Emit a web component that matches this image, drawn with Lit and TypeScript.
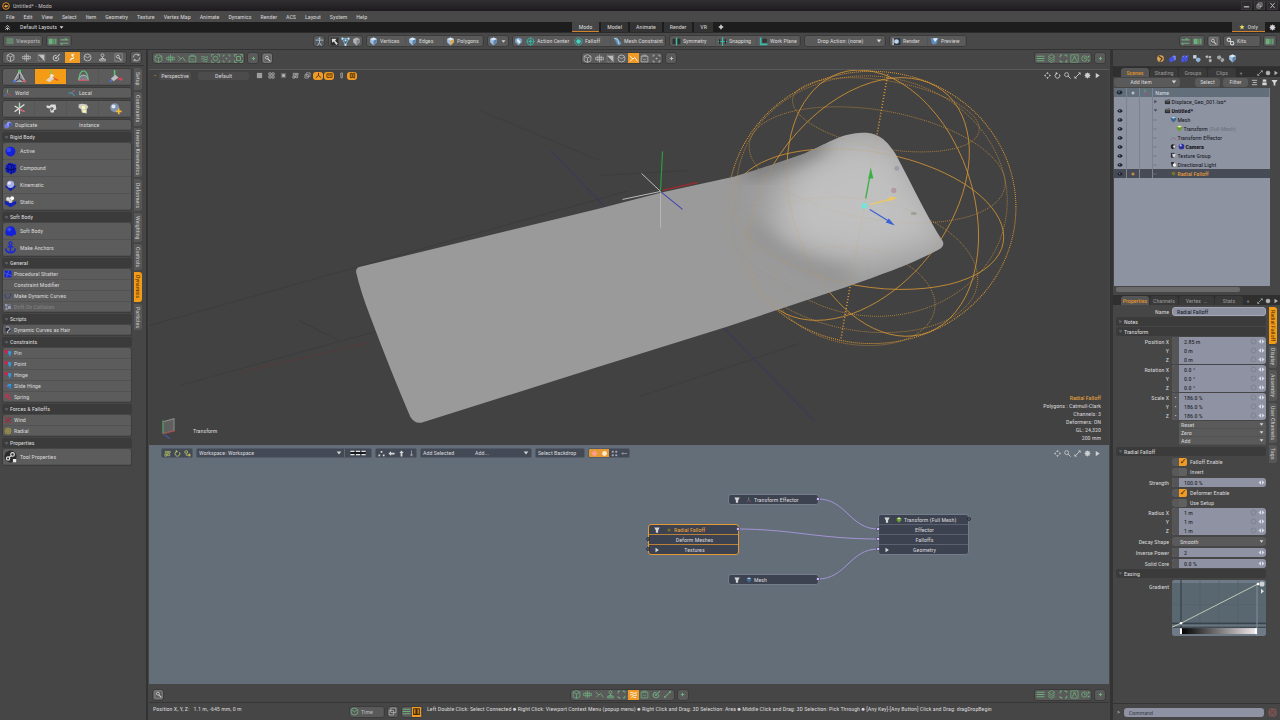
import { LitElement, html, svg, css, nothing } from "lit";
import { customElement } from "lit/decorators.js";
import { classMap } from "lit/directives/class-map.js";
import { styleMap } from "lit/directives/style-map.js";

const icons: Record<string, unknown> = {
  logo: svg`<circle cx="8" cy="8" r="6.6" fill="#1c1a18" stroke="#e0912f" stroke-width="2"/><path d="M4 9l3-4 2 2 3-1-1 4-4 1z" fill="#e8a24a"/>`,
  home: svg`<path d="M3 8l5-5 5 5M3 13l5-5 5 5M8 9v5" fill="none" stroke="currentColor" stroke-width="2"/>`,
  lines: svg`<path d="M1 4h14M1 8h14M1 12h14" stroke="currentColor" stroke-width="2.2"/>`,
  panel: svg`<path d="M1 3h14v10H1z" fill="currentColor"/><path d="M9 3v10M12 3v10" stroke="#3d4a42" stroke-width="1"/>`,
  swap: svg`<path d="M1 5h14M1 11h14" stroke="currentColor" stroke-width="2"/><path d="M9 2l3 3M4 14l-3-3" stroke="currentColor" stroke-width="2"/>`,
  cube: svg`<path d="M8 1l6 3v8l-6 3-6-3V4zM2 4l6 3 6-3M8 7v8" fill="none" stroke="currentColor" stroke-width="1.4"/>`,
  cross: svg`<path d="M8 1v14M1 6h14v4H1zM5 3v10M11 3v10" fill="none" stroke="currentColor" stroke-width="1.3"/>`,
  tri: svg`<path d="M3 2l11 11H3z" fill="currentColor" transform="rotate(180 8 8)"/><path d="M2 2h12v12H2z" fill="none" stroke="currentColor" stroke-dasharray="2 2"/>`,
  pen: svg`<path d="M14 2L7 9M12 8a5 5 0 1 1-4-4" fill="none" stroke="currentColor" stroke-width="1.8"/><circle cx="7" cy="9" r="1.8" fill="currentColor"/>`,
  spring: svg`<path d="M11 2c-3 0-5 2-3 4s3 3 0 4-5 1-4 4M6 3l4 2M5 11l5-2" fill="none" stroke="currentColor" stroke-width="1.7"/>`,
  clock: svg`<circle cx="8" cy="8" r="6.2" fill="none" stroke="currentColor" stroke-width="1.6"/><path d="M4 6l4 2.5L12 6" fill="none" stroke="currentColor" stroke-width="1.5"/>`,
  stamp: svg`<circle cx="8" cy="4" r="2.6" fill="none" stroke="currentColor" stroke-width="1.5"/><path d="M8 7v3M3 14h10v-3H3zM5 10h6" fill="none" stroke="currentColor" stroke-width="1.6"/>`,
  search: svg`<path d="M1.5 1.5h13v13h-13z" fill="none" stroke="#a8a8a8" stroke-width="1"/><circle cx="7" cy="6.5" r="2.6" fill="none" stroke="#cfcfcf" stroke-width="1.6"/><path d="M9 9l4 4" stroke="#cfcfcf" stroke-width="2"/>`,
  refresh: svg`<path d="M2 8a6 6 0 0 1 10-4.5M14 8a6 6 0 0 1-10 4.5" fill="none" stroke="currentColor" stroke-width="1.5"/><path d="M13 1v4H9zM3 15v-4h4z" fill="currentColor"/>`,
  bone: svg`<path d="M1 3l6 6 3-3 5 7M2 13l5-5" fill="none" stroke="currentColor" stroke-width="1.5"/>`,
  link: svg`<circle cx="12.500" cy="3.500" r="1.800" fill="currentColor"/><circle cx="3.500" cy="12.500" r="1.800" fill="currentColor"/><path d="M4 12l8-8" stroke="currentColor" stroke-width="1.800"/>`,
  box: svg`<path d="M2 4h12v10H2zM5 4V2h6v2M5 8l3 3 3-3" fill="none" stroke="currentColor" stroke-width="1.4"/>`,
  frame: svg`<path d="M1.500 1.500h13v13h-13z" fill="none" stroke="currentColor" stroke-width="1.400"/><path d="M4 12l4-7 4 7M6 5h4" fill="none" stroke="currentColor" stroke-width="1.500"/>`,
  timer: svg`<circle cx="6" cy="8" r="4.800" fill="none" stroke="currentColor" stroke-width="1.500"/><path d="M6 5v3h3" fill="none" stroke="currentColor" stroke-width="1.300"/><path d="M12 3h3v3h-3zM12 10h3v3h-3z" fill="currentColor"/>`,
  wave: svg`<path d="M2 5c3-3 5 3 12 0M2 9c4-3 6 3 12 0M4 13c3-3 5 2 9 0" fill="none" stroke="currentColor" stroke-width="1.6"/>`,
  target: svg`<path d="M1 5V1h4M11 1h4v4M15 11v4h-4M5 15H1v-4" fill="none" stroke="currentColor" stroke-width="1.4"/><circle cx="8" cy="8" r="4" fill="none" stroke="currentColor" stroke-width="1.5"/>`,
  dots: svg`<path d="M2 5V2h3M11 2h3v3M14 11v3h-3M5 14H2v-3" fill="none" stroke="currentColor" stroke-width="1.4"/><circle cx="8" cy="8" r="1.5" fill="currentColor"/>`,
  square: svg`<path d="M1 5V1h4M11 1h4v4M15 11v4h-4M5 15H1v-4M4.500 4.500h7v7h-7z" fill="none" stroke="currentColor" stroke-width="1.6"/>`,
  corners: svg`<path d="M2 6V2h4M10 2h4v4M14 10v4h-4M6 14H2v-4" fill="none" stroke="currentColor" stroke-width="1.800" stroke-dasharray="3 1"/>`,
  plus: svg`<path d="M8 5v6M5 8h6" stroke="currentColor" stroke-width="2"/>`,
  bigplus: svg`<path d="M8 2v12M2 8h12" stroke="currentColor" stroke-width="4"/>`,
  layers: svg`<path d="M8 1l6 3.500-6 3.500-6-3.500zM2 8l6 3.500L14 8M2 11.500L8 15l6-3.500" fill="none" stroke="currentColor" stroke-width="1.4"/>`,
  person: svg`<circle cx="8" cy="2.500" r="1.700" fill="#a9cbe8"/><path d="M1 5.500h14M8 5v5l-3.500 5.500M8 10l3.500 5.500" fill="none" stroke="#a9cbe8" stroke-width="1.500"/>`,
  pic: svg`<path d="M1 1h14v14H1z" fill="#2c2c2c"/><path d="M3 3h9l-3 3 5 6-3 2-4-6-3 2z" fill="#d8d8d8"/>`,
  net: svg`<path d="M2 3h12L8 14z" fill="#3e596b" stroke="#8fc7e6" stroke-width="1.500"/><circle cx="2.500" cy="3" r="2" fill="#bfe4f6"/><circle cx="13.500" cy="3" r="2" fill="#bfe4f6"/><circle cx="8" cy="14" r="2" fill="#bfe4f6"/><circle cx="8" cy="6" r="2" fill="#bfe4f6"/>`,
  shade: svg`<path d="M8 1l6 2.500v6L8 15 2 9.500v-6z" fill="#aeb2b5"/><path d="M8 6l6-2.500v6L8 15z" fill="#85888b"/>`,
  blue: svg`<path d="M8 1l6 2.500v6L8 15 2 9.500v-6z" fill="#9dbfe0"/><path d="M8 6l6-2.500v6L8 15z" fill="#5f83ab"/><path d="M2 3.500L8 1l6 2.500L8 6z" fill="#d6e6f4"/>`,
  poly: svg`<path d="M8 1l6 2.500v6L8 15 2 9.500v-6z" fill="#9dbfe0"/><path d="M8 6l6-2.500v6L8 15z" fill="#e8a548"/><path d="M2 3.500L8 1l6 2.500L8 6z" fill="#d6e6f4"/>`,
  shield: svg`<path d="M8 1l6 2.500v6L8 15 2 9.500v-6z" fill="#7ea5c8"/><path d="M5 4h3l4 5-3 3-4-5z" fill="#e2eef6"/>`,
  action: svg`<circle cx="8" cy="8" r="6" fill="none" stroke="#35b3a5" stroke-width="1.600"/><circle cx="8" cy="8" r="2.500" fill="#35b3a5"/><path d="M8 0v16M0 8h16" stroke="#35b3a5"/>`,
  falloff: svg`<circle cx="8" cy="8" r="6.500" fill="none" stroke="#35c9ba" stroke-width="1.600" stroke-dasharray="2 1"/><circle cx="8" cy="8" r="4" fill="#43d1c1"/>`,
  constraint: svg`<path d="M2 2l5-1 8 10-4 4-4-2z" fill="#5f94b8"/><path d="M2 2l6 2 3 9" fill="none" stroke="#c5e3f3" stroke-width="1.500"/>`,
  sym: svg`<path d="M1 3h5v10H1zM10 3h5v10h-5z" fill="#2b3331"/><path d="M8 1v14" stroke="#3bbfae" stroke-width="2"/>`,
  snap: svg`<path d="M8 0v16M0 8h16" stroke="#39b9a8" stroke-width="2"/><path d="M3 4v8M13 4v8" stroke="#222" stroke-width="2"/>`,
  plane: svg`<path d="M3 1v12h12" fill="none" stroke="#39b9a8" stroke-width="3"/><path d="M6 3h8v7H6z" fill="#333"/>`,
  render: svg`<path d="M1 2h14v12H1z" fill="#2b3442"/><circle cx="8" cy="8" r="4.200" fill="#bcd5ee"/><path d="M1 2h2v12H1z" fill="#eee"/>`,
  preview: svg`<path d="M1 2h14l-4 11H4z" fill="#5e8ec5"/><path d="M5 2h9L9 9z" fill="#e4f0fb"/>`,
  kits: svg`<circle cx="5" cy="5" r="3" fill="none" stroke="#ddd" stroke-width="1.800"/><circle cx="11" cy="11" r="3" fill="none" stroke="#ddd" stroke-width="1.800"/><path d="M7 7l2 2" stroke="#ddd" stroke-width="2"/>`,
  star: svg`<path d="M8 1l2 5h5l-4 3.500 1.500 5L8 11.500 3.500 14.500 5 9.500 1 6h5z" fill="#f0e06a"/>`,
  gear: svg`<circle cx="8" cy="8" r="5.500" fill="currentColor"/><path d="M8 1v14M1 8h14M3 3l10 10M13 3L3 13" stroke="currentColor" stroke-width="1.500"/>`,
  move: svg`<path d="M8 0l3 4H5zM8 16l3-4H5zM0 8l4-3v6zM16 8l-4-3v6z" fill="currentColor"/>`,
  orbit: svg`<path d="M12 5a5.500 5.500 0 1 1-7-1" fill="none" stroke="currentColor" stroke-width="2"/><path d="M4 0l5 3-5 4z" fill="currentColor"/>`,
  lens: svg`<circle cx="6" cy="6" r="4.500" fill="none" stroke="currentColor" stroke-width="1.800"/><path d="M9.500 9.500L15 15" stroke="currentColor" stroke-width="2.200"/>`,
  expand: svg`<path d="M9 1h6v6zM7 15H1V9z" fill="currentColor"/><path d="M12 4l-8 8" stroke="currentColor" stroke-width="2"/>`,
  right: svg`<path d="M4 2l9 6-9 6z" fill="currentColor"/>`,
  down: svg`<path d="M2 4h12l-6 8z" fill="currentColor"/>`,
  vee: svg`<path d="M1 1h14l-4 8v6H5V9z" fill="currentColor"/>`,
  funnel: svg`<path d="M1 2h14L10 9v6H6V9z" fill="currentColor"/>`,
  pan: svg`<path d="M2 2h12v12H2z" fill="currentColor" opacity=".75"/>`,
  grid4: svg`<path d="M2 2h5v5H2zM9 2h5v5H9zM2 9h5v5H2zM9 9h5v5H9z" fill="none" stroke="currentColor" stroke-width="1.600"/>`,
  mini: svg`<path d="M2 2h12v12H2z" fill="#666"/><path d="M5 5h6v6H5z" fill="currentColor"/>`,
  nodes: svg`<path d="M3 3h5v4H3zM8 9h5v4H8zM10 3h4v4h-4zM2 9h4v5H2z" fill="none" stroke="currentColor" stroke-width="1.600"/>`,
  addnode: svg`<path d="M2 2h6v5H2zM5 7v5h4" fill="none" stroke="currentColor" stroke-width="1.600"/><path d="M12 8v7M8.500 11.500h7" stroke="#e3d35a" stroke-width="2"/>`,
  windows: svg`<path d="M5 2h9v8H5zM2 6h8v8H2z" fill="#464646" stroke="currentColor" stroke-width="1.400"/>`,
  axisdk: svg`<path d="M8 2v6l-6 5M8 8l6 5" fill="none" stroke="#4a2c05" stroke-width="2"/>`,
  cam: svg`<path d="M2 4h12v8H2zM5 12v2M11 12v2M4 7h8" fill="none" stroke="#4a2c05" stroke-width="1.800"/>`,
  pause: svg`<path d="M3 3h4v10H3zM9 3h4v10H9z" fill="none" stroke="#4a2c05" stroke-width="2"/>`,
  pill: svg`<path d="M6 3l4-1v11l-3 1z" fill="none" stroke="currentColor" stroke-width="1.600"/>`,
  giz1: svg`<path d="M8 2l6 11H2z" fill="#8a8d94" stroke="#c9ccd2"/><path d="M8 6v4l-4 3M8 10l4 3" stroke="#333" fill="none"/><circle cx="8" cy="2" r="1.600" fill="#5fc46f"/><circle cx="2.500" cy="13" r="1.500" fill="#4b78d8"/><circle cx="13.500" cy="13" r="1.500" fill="#d25b6a"/>`,
  giz2: svg`<path d="M8 9V1" stroke="#77c95e" stroke-width="1.500"/><path d="M8 9l7 3" stroke="#e2563a" stroke-width="1.500"/><path d="M2 12l5-4 4 2-5 4z" fill="#ddd6c8"/><path d="M8 5l3 2-3 3-2-3z" fill="#f3e6c8"/>`,
  giz3: svg`<path d="M3 12a5 5.500 0 0 1 10 0z" fill="#777c86" stroke="#bfc4cc"/><path d="M3 12a5 10 0 0 1 10 0" fill="none" stroke="#62bd78" stroke-width="1.300"/><path d="M3 12h10" stroke="#c65a6a" stroke-width="1.500"/>`,
  giz4: svg`<path d="M7 8V1" stroke="#5fc46f" stroke-width="1.600"/><path d="M7 8l-5 6" stroke="#4b78d8" stroke-width="1.600"/><path d="M6 9l9 2" stroke="#d2465a" stroke-width="1.800"/><path d="M13 9l3 2-3 2z" fill="#d2465a"/><path d="M3 10l5-4 3 3-5 4z" fill="#b9bdc4"/>`,
  axes: svg`<path d="M7 8V1" stroke="#5fc46f" stroke-width="1.700"/><path d="M7 8l-6 6" stroke="#4b78d8" stroke-width="1.700"/><path d="M7 8l7 5" stroke="#d2465a" stroke-width="1.700"/>`,
  local: svg`<path d="M8 8l5-6M8 8h-7M8 8l5 6" stroke="#3aaed8" stroke-width="1.700"/><path d="M8 8l5-6" stroke="#c0464a" stroke-width="1.500"/>`,
  starx: svg`<path d="M8 1v14M2 5l12 7M14 3L2 12" stroke="#e6e6e6" stroke-width="1.400"/><path d="M8 8l6 4" stroke="#d2465a" stroke-width="1.500"/><path d="M8 8V1" stroke="#9fdca8" stroke-width="1.500"/>`,
  rocks: svg`<path d="M2 4l4 1 1-2 6 0 1 6-3 1 0 3-4 0-1-5-4-1z" fill="#dcdcdc"/><path d="M6 7l3-1 2 2-3 3z" fill="#6a6a6a"/>`,
  torch: svg`<path d="M2 3l4-1 6 1 2 3-2 3v5l-6-1-1-4-3-2z" fill="#cfcfc4"/><path d="M6 5h4v4H6zM7 10h4v3H7z" fill="#fbf7b2"/>`,
  ball: svg`<circle cx="7" cy="7" r="5.500" fill="#7f93ac"/><circle cx="5.500" cy="5.500" r="2.500" fill="#dbe6f2"/><path d="M12 8v7M8.500 11.500h7" stroke="#f0b83c" stroke-width="2"/>`,
  dup: svg`<path d="M1 7l4-2 5 2v6l-5 2-4-2z" fill="#6f7be0"/><path d="M6 3l4-2 5 2v6l-5 2-4-2z" fill="#8c97f3"/><path d="M10 5l5-2v6l-5 2z" fill="#4a54bb"/>`,
  active: svg`<circle cx="8" cy="8" r="6" fill="#1322d8"/><circle cx="6" cy="6" r="3" fill="#3344f4"/>`,
  compound: svg`<path d="M2 4l5-3 8 2v9l-6 3-7-3z" fill="#1422d0"/><path d="M2 8l7 2 6-2M5 2.500l7 2v9M9 5v10M5 4v9" fill="none" stroke="#070b66" stroke-width="1.300"/>`,
  kinematic: svg`<path d="M1 9l7-2 7 2-7 6z" fill="#1220a8"/><circle cx="8" cy="6.500" r="4.500" fill="#a7aee8"/><circle cx="6.500" cy="5" r="2" fill="#e6e8ff"/>`,
  static: svg`<path d="M1 7l7 3 7-3v4l-7 4-7-4z" fill="#1523bd"/><circle cx="5" cy="5" r="2.400" fill="#e6e6e6"/><circle cx="10" cy="4" r="2.400" fill="#fff"/><circle cx="8" cy="7.500" r="2.400" fill="#d0d0d0"/>`,
  soft: svg`<path d="M2 8a6 6 0 0 1 12-1c2 4 0 6-2 5-2 3-4 2-5 1-4 1-6-1-5-5z" fill="#1322d8"/><circle cx="6.500" cy="5.500" r="2.500" fill="#3647f0"/>`,
  anchor: svg`<circle cx="8" cy="3" r="1.900" fill="none" stroke="#1b2ad6" stroke-width="1.600"/><path d="M8 5v9M2 9c1 7 11 7 12 0M4.500 7h7" fill="none" stroke="#1b2ad6" stroke-width="2"/>`,
  shatter: svg`<path d="M1 1h14v14H1z" fill="#1926cf"/><path d="M1 6l6 2 3-7M7 8l-2 7M7 8l8 3" stroke="#5f6cf5" stroke-width="1.300" fill="none"/>`,
  curve: svg`<path d="M2 4c0 12 10 12 12-2" fill="none" stroke="#343f8e" stroke-width="2"/>`,
  drift: svg`<path d="M2 2h5v5H2zM8 6h6v6H8zM3 9h4v5H3z" fill="#9298b2"/><path d="M9 2h4v3H9z" fill="#767b94"/>`,
  hair: svg`<circle cx="8" cy="7" r="5" fill="#2b2b3a"/><path d="M4 3c4-3 8 0 8 4l-4 2-1 5" fill="none" stroke="#c9c9e6" stroke-width="2"/>`,
  pin: svg`<path d="M0 2l9 1-2 7-5-3z" fill="#d61f4d"/><path d="M8 4l7 1-3 10-3-5z" fill="#2aa0e4"/>`,
  slide: svg`<path d="M1 8l9-4 5 0-2 4-8 1z" fill="#2aa0e4"/><path d="M8 8l7 0-2 7-3-3z" fill="#2a7fd0"/><path d="M2 8l5-1" stroke="#d61f4d" stroke-width="2"/>`,
  coil: svg`<path d="M2 3c6-3 9 2 4 3s-2 4 3 2 5 4 0 5" fill="none" stroke="#d12b50" stroke-width="2.200"/>`,
  wind: svg`<path d="M2 2l12 12M2 8l7 7M8 2l6 6M2 14L14 2" stroke="#a62237" stroke-width="2"/>`,
  radial: svg`<circle cx="8" cy="8" r="6" fill="none" stroke="#c4b435" stroke-width="1.300"/><circle cx="8" cy="8" r="3.500" fill="none" stroke="#c4b435"/><circle cx="8" cy="8" r="1.500" fill="#e3d343"/>`,
  tool: svg`<circle cx="8" cy="8" r="7.500" fill="#2c2c2c"/><circle cx="5" cy="10.500" r="2" fill="none" stroke="#dcdcdc" stroke-width="1.500"/><circle cx="10.500" cy="5.500" r="2.200" fill="none" stroke="#dcdcdc" stroke-width="1.500"/><path d="M6.500 9l2.500-2" stroke="#dcdcdc" stroke-width="1.500"/><path d="M11 11h4v4h-4z" fill="#e8e8e8"/>`,
  eye: svg`<path d="M1 8c2-6 12-6 14 0-2 6-12 6-14 0z" fill="#22252e"/><circle cx="7" cy="7" r="1.800" fill="#8a90a0"/>`,
  clap: svg`<path d="M2 6h12v8H2z" fill="#2b2d33"/><path d="M2 5l11-3 1 2-11 3z" fill="#555963"/><path d="M4 9h8" stroke="#aaa"/>`,
  mesh: svg`<path d="M2 3l6-2 6 2v6l-6 6-6-6z" fill="#41678c"/><path d="M2 3l6-2 6 2-6 3z" fill="#a6cbe6"/>`,
  xform: svg`<path d="M2 3l6-2 6 2v6l-6 6-6-6z" fill="#6e9a35"/><path d="M2 3l6-2 6 2-6 3z" fill="#dbe9a5"/>`,
  orb: svg`<circle cx="8" cy="8" r="6.500" fill="#2a2f9a"/><circle cx="6" cy="5.500" r="2.400" fill="#b9bdf0"/>`,
  camic: svg`<path d="M8 2a6 6 0 1 0 0 12z" fill="#1d1f26"/><circle cx="10" cy="8" r="3.500" fill="#d8dae2" stroke="#1d1f26"/>`,
  tex: svg`<path d="M2 2h8v11H2z" fill="#2b2e36"/><path d="M5 4l8 1-3 8-4-3z" fill="#d8d8d4"/>`,
  light: svg`<path d="M2 3l7-1v11l-5-1z" fill="#22242b"/><circle cx="10" cy="9" r="4" fill="#efefe6"/>`,
  fall: svg`<circle cx="8" cy="8" r="3" fill="#8d9a1c"/><path d="M8 1v14M1 8h14M3 3l10 10M13 3L3 13" stroke="#7c6b1c" stroke-width=".8"/>`,
  brush: svg`<circle cx="8" cy="8" r="6" fill="#d9a559"/><path d="M5 4l6 4-4 5" fill="none" stroke="#49371c" stroke-width="2"/>`,
  blues: svg`<path d="M2 8l5-3 4 2v5l-5 3-4-2z" fill="#4452dd"/><path d="M7 5l4-3 3 2v6l-3 2V7z" fill="#7682f2"/>`,
  bluet: svg`<path d="M2 9l4-7 4 1-3 11-5 0zM9 7l2-5 4 1-2 10-5 1z" fill="#4452dd"/><path d="M4 6l3-3M10 6l3-3" stroke="#98a1ff" stroke-width="1.500"/>`,
  greys: svg`<path d="M2 2h6v6H2z" fill="#c5d3df"/><path d="M7 8l4-2 4 2v4l-4 3-4-3z" fill="#8fb5d8"/>`,
  rock2: svg`<path d="M2 4l5-2 3 4-4 4-4-2zM9 8l4-1 2 4-4 4-3-3z" fill="#a2a5a2"/>`,
  rock3: svg`<path d="M2 4l4-2 2 3-3 3zM9 3l4 1-1 4-4-1zM8 10l5-1 1 4-4 2z" fill="#b5b8b5"/>`,
  tree3: svg`<path d="M6 2h4v4H6zM1 10h4v4H1zM11 10h4v4h-4z" fill="currentColor"/>`,
  left: svg`<path d="M1 8l6-5v3h8v4H7v3z" fill="currentColor"/>`,
  up: svg`<path d="M8 1l5 6h-3v8H6V7H3z" fill="currentColor"/>`,
  dn: svg`<path d="M8 15l4-5H9V1H7v9H4z" fill="#9a9faa"/>`,
  cells: svg`<path d="M1 2h10v3H1zM1 10h10v3H1zM15 2h10v3H15zM15 10h10v3H15zM29 2h10v3H29zM29 10h10v3H29z" fill="#e6e6e6"/><path d="M1 5h38v5H1z" fill="#181a20"/>`,
  rdot: svg`<path d="M8 1l7 7-7 7-7-7z" fill="#ff9d94"/>`,
  wdot: svg`<circle cx="8" cy="8" r="5.500" fill="#ffe9c9"/>`,
  four: svg`<circle cx="4" cy="4" r="2.500" fill="#aab"/><circle cx="12" cy="4" r="2.500" fill="#aab"/><circle cx="4" cy="12" r="2.500" fill="#aab"/><circle cx="12" cy="12" r="2.500" fill="#aab"/>`,
  arrowl: svg`<path d="M2 8h12M2 8l3-3M2 8l3 3" fill="none" stroke="#9a9faa" stroke-width="1.800"/>`,
  min: svg`<path d="M2 11h12" stroke="currentColor" stroke-width="3"/>`,
  bars: svg`<path d="M2 3h12M4 8h9M2 13h12" stroke="currentColor" stroke-width="1.800"/>`,
  doc: svg`<path d="M4 1h8v5H4zM3 8h10v6H3z" fill="currentColor"/>`,
  close: svg`<path d="M3 2l10 12M13 2L3 14" stroke="currentColor" stroke-width="2.200"/>`,
  rec: svg`<rect x="2" y="2" width="12" height="12" rx="3" fill="none" stroke="#a85c5c" stroke-width="1.600"/><circle cx="8" cy="8" r="3" fill="none" stroke="#a85c5c" stroke-width="1.600"/>`,
  rev: svg`<path d="M1 8l6-5v10zM15 8L9 3v10z" fill="#d6d8e2"/>`,
  keyb: svg`<rect x="3" y="3" width="10" height="10" rx="3" fill="none" stroke="#777c8c" stroke-width="1.600"/>`,
};

const ic = (name: string, size = 9) => svg`<svg class="ic" width=${size} height=${size}
  viewBox="0 0 16 16" aria-hidden="true">${icons[name]}</svg>`;

const base = css`
  * { box-sizing: border-box; }
  :host { font-family: "Roboto Condensed", Lato, sans-serif; font-size: 6px; line-height: 8px; color: #d6d6d6; }
  button, input, select { font: inherit; color: inherit; border: 0; margin: 0; padding: 0; background: none; min-width: 0; border-radius: 0; }
  button { display: flex; align-items: center; white-space: nowrap; }
  select { appearance: none; outline: 0; }
  .ic { flex: none; display: block; }
`;

/** Wireframe globe of the falloff, projected with a mild perspective. */
type V = [number, number, number];
function globe() {
  const c = [870, 207], r = 138, d = 5;
  const len = (v: V): V => { const l = Math.hypot(...v); return [v[0] / l, v[1] / l, v[2] / l]; };
  const up = len([0.15, -0.86, 0.48]);
  const u = len([up[1], -up[0], 0]);
  const w: V = [up[1] * u[2] - up[2] * u[1], up[2] * u[0] - up[0] * u[2], up[0] * u[1] - up[1] * u[0]];
  const ring = (f: (t: number) => [number, number, number]) => {
    let p = "";
    for (let i = 0; i <= 72; i++) {
      const [a, b, h] = f((i / 72) * Math.PI * 2);
      const v = [0, 1, 2].map((k) => u[k] * a + w[k] * b + up[k] * h);
      const s = (r * (d - 0.1)) / (d - v[2]);
      p += `${i ? "L" : "M"}${(c[0] + v[0] * s).toFixed(1)} ${(c[1] + v[1] * s).toFixed(1)}`;
    }
    return p;
  };
  const rad = Math.PI / 180;
  const lat = (deg: number) => ring((t) => [Math.cos(t) * Math.cos(deg * rad), Math.sin(t) * Math.cos(deg * rad), Math.sin(deg * rad)]);
  const mer = (deg: number) => ring((t) => [Math.cos(t) * Math.cos(deg * rad), Math.cos(t) * Math.sin(deg * rad), Math.sin(t)]);
  return svg`
    <ellipse cx="872" cy="207" rx="144" ry="136" class="dot"/>
    ${[25, 50, -25, -50].map((a) => svg`<path d=${lat(a)} class="thin"/>`)}
    <path d="M888 74L845 316L841 340" class="dotb"/><path d=${mer(0)} class="thin"/>
    ${[42, 138].map((a) => svg`<path d=${mer(a)} class="solid"/>`)}
    <path d=${lat(0)} class="solid"/>`;
}

const PLANE = "M357 272Q356 267 362 266L600 208L662 192L735 176C765 167 785 160 805 153C825 145 840 133 863 132.500C880 132 888 142 896 154C912 184 928 218 943 241Q945 246 939 249C915 262 885 273 848 286L725 327L600 366L422 422Q415 423 411 416Q392 372 371 316Q361 290 357 272Z";

@customElement("model-viewport")
export class ModelViewport extends LitElement {
  static styles = [base, css`
    :host { display: block; position: relative; overflow: hidden; background: #424242; border-top: 1px solid #5a5a5a; }
    .scene { position: absolute; inset: 0; width: 100%; height: 100%; }
    .dot, .dotb, .thin, .solid { fill: none; stroke: #dc9833; }
    .dot { stroke-dasharray: 1 1; } .dotb { stroke-dasharray: 1 2; stroke-width: 1.6; }
    .thin { stroke-dasharray: 1 1; opacity: .85; stroke-width: .8; }
    .solid { stroke-width: .8; }
    .head { position: relative; display: flex; align-items: center; height: 9px; margin: 1px 8px 0 5px; }
    .head .pt { width: 5px; color: #d98d2b; }
    .drop { background: #4c4c4c; border-radius: 2px; height: 8px; justify-content: center; }
    .a { width: 32px; margin-right: 7px; } .b { width: 51px; margin-right: 4px; }
    .i { width: 12px; height: 8px; justify-content: center; color: #bdbdbd; }
    .i.on { background: #f09b25; border-radius: 3px; width: 10px; margin-right: 1px; }
    .nav { margin-left: auto; display: flex; gap: 3px; color: #cfcfcf; }
    .label { position: absolute; left: 44px; bottom: 10px; }
    .info { position: absolute; right: 8px; bottom: 3px; text-align: right; line-height: 8px; }
    .info b { color: #f0a63c; font-weight: 400; }
  `];
  render() {
    const mini = ["pan", "grid4", "mini", "nodes", "windows", "axisdk", "cam", "pill", "pause"];
    return html`
      <svg class="scene" viewBox="150 69 959 376" preserveAspectRatio="xMidYMid slice" aria-hidden="true">
        <defs>
          <clipPath id="m"><path d=${PLANE}/></clipPath>
          <filter id="f" x="-50%" y="-50%" width="200%" height="200%"><feGaussianBlur stdDeviation="17"/></filter>
          <filter id="g" x="-50%" y="-50%" width="200%" height="200%"><feGaussianBlur stdDeviation="9"/></filter>
        </defs>
        <g fill="none" stroke="#3d3d3d"><path d="M150 325L630 190M480 110L600 160M300 320L340 340M640 396L800 343M600 175L690 170M180 385L380 330"/>
          <path d="M370 342L240 372" stroke="#553b3b"/><path d="M551 150L606 207M724 327L815 421" stroke="#3a3a5c"/></g>
        <path d="M663 190L698 182" stroke="#a02a2a" stroke-width="1.200"/>
        ${globe()}
        <path d=${PLANE} fill="#9a9a9a"/>
        <g clip-path="url(#m)">
          <path d="M785 175Q860 110 900 150L955 240L870 262Q800 262 770 230Z" fill="#c0c0c0" filter="url(#f)"/>
          <path d="M745 170Q790 163 825 141" fill="none" stroke="#686868" stroke-width="11" filter="url(#g)"/>
          <path d="M752 225Q785 268 850 275" fill="none" stroke="#8a8a8a" stroke-width="10" filter="url(#g)"/>
          <g opacity=".22">${globe()}</g>
        </g>
        <path d="M661 227V192" stroke="#b5b5b5"/><path d="M661 191L642 173M661 191L623 199" stroke="#c8c8c8" stroke-width=".9"/>
        <path d="M661 190L663 151" stroke="#2f9a3c" stroke-width="1.200"/><path d="M662 192L683 209" stroke="#4242b4"/>
        <path d="M866 198L870 176" stroke="#37b045" stroke-width="1.300"/><path d="M868.500 178L871 167L873.500 178Z" fill="#37b045"/>
        <path d="M871 204L890 199" stroke="#efc95a" stroke-width="1.300"/><path d="M889 196.500L898 197L890 201Z" fill="#efc95a"/>
        <path d="M870 209L888 220" stroke="#3a62d6" stroke-width="1.300"/><path d="M889 218L895 225L886 222Z" fill="#3a62d6"/>
        <rect x="862" y="203" width="5" height="5" fill="#6fe6dc"/>
        <circle cx="897" cy="168" r="2.400" fill="#9c9cab"/><circle cx="894" cy="190" r="2.600" fill="#b39a9e"/><ellipse cx="914" cy="213" rx="3" ry="1.600" fill="#9ba398"/>
        <path d="M164 421L175 418V430L164 433Z" fill="#5f5f5f" stroke="#8d8d8d"/><path d="M164 433V419" stroke="#3c9a48"/><path d="M164 433L176 430" stroke="#a84646"/><path d="M165 434L171 438" stroke="#4a5ab8"/>
      </svg>
      <div class="head">
        <span class="pt">•</span>
        <button class="drop a">Perspective</button><button class="drop b">Default</button>
        ${mini.map((n) => html`<button aria-label=${n} class=${classMap({ i: true, on: ["axisdk", "cam", "pause"].includes(n) })}>${ic(n, 7)}</button>`)}
        <div class="nav">${["move", "orbit", "lens", "expand", "gear", "right"].map((n) => ic(n, 7))}</div>
      </div>
      <div class="label">Transform</div>
      <div class="info"><div><b>Radial Falloff</b></div><div>Polygons : Catmull-Clark</div><div>Channels: 3</div><div>Deformers: ON</div><div>GL: 24,320</div><div>200 mm</div></div>`;
  }
}

interface NodeBox { x: number; y: number; title: string; icon?: string; rows?: string[]; sel?: boolean; arrow?: number }

@customElement("app-root")
export class AppRoot extends LitElement {
  static styles = [base, css`
    :host { display: grid; grid-template-rows: 11px 11px 11px 17px minmax(0, 1fr); height: 100vh; min-height: 640px; background: #464646; overflow: hidden; }
    .title { display: flex; align-items: center; gap: 3px; padding: 0 2px; background: linear-gradient(#312f31, #1d1b1d); color: #bcbcbc; }
    .title .win { margin-left: auto; display: flex; gap: 2px; }
    .win button { width: 11px; height: 9px; justify-content: center; background: #2e2c2e; border: 1px solid #3a383a; }
    .menu { display: flex; align-items: center; gap: 9px; padding: 0 6px; background: #494949; }
    .menu button { height: 10px; }
    .layouts { display: grid; grid-template-columns: 1fr auto 1fr; align-items: center; background: #1d1d1d; border-bottom: 1px solid #2c2c2c; }
    .layouts > div { display: flex; align-items: center; }
    .layouts .l { padding-left: 4px; gap: 9px; }
    .layouts .l button { gap: 2px; }
    .tabs3 { gap: 2px; padding-left: 16px; }
    .tabs3 button { height: 10px; padding: 0 6px; background: #333; border-bottom: 1px solid #333; }
    .tabs3 button:first-child { padding: 0 7px; }
    .tabs3 button.on, .only { background: #464646; border-bottom: 1px solid #d4832b; }
    .r { justify-content: flex-end; gap: 4px; padding-right: 4px; }
    .only { gap: 3px; padding: 0 7px; height: 10px; }
    .tools { display: grid; grid-template-columns: 1fr auto 1fr; align-items: center; padding: 0 3px; border-bottom: 1px solid #333; background: #484848; }
    .tools > div { display: flex; gap: 3px; align-items: center; }
    .grp { display: flex; background: #5a5a5a; border: 1px solid #3b3b3b; border-radius: 3px; height: 12px; overflow: hidden; align-items: center; }
    .grp button, .grp .sel { height: 100%; gap: 2px; padding-left: 2px; border-right: 1px solid #525252; }
    .grp button.c { justify-content: center; padding: 0 1px; }
    .grp button.i1 { justify-content: center; padding: 0; border: 0; }
    .grp button.on { background: #f09b25; color: #fff; }
    .grp button.t { color: #d6d6d6; }
    .green { color: #6fae7d; }
    .grey, .grey button { color: #bcbcbc; }
    .tools .r { padding: 0; gap: 2px; }
    .sel { position: relative; display: flex; align-items: center; }
    .sel select { width: 100%; height: 100%; text-align: center; padding-right: 10px; }
    .sel .ic { position: absolute; right: 2px; pointer-events: none; }

    .main { display: grid; grid-template-columns: 148px minmax(0, 1fr) 170px; min-height: 0; }
    .left { display: grid; grid-template-rows: 16px 1fr; border-right: 2px solid #333; padding-right: 2px; }
    .bar { display: flex; align-items: center; border-bottom: 1px solid #343434; padding: 0 2px; gap: 3px; color: #c2c2c2; }
    .bar .grp { height: 13px; }
    .fill { flex: 1; } .fill button { flex: 1; }
    .lbody { display: grid; grid-template-columns: 130px 8px; gap: 2px; padding: 2px 0 0 2px; align-items: start; }
    .stack { display: flex; flex-direction: column; gap: 1px; }
    .set { background: #5c5c5c; border: 1px solid #3c3c3c; border-radius: 3px; overflow: hidden; display: grid; }
    .set.four { grid-template-columns: repeat(4, 1fr); height: 18px; }
    .set.two { grid-template-columns: 1fr 1fr; height: 12px; }
    .set.four button { justify-content: center; border-right: 1px solid #565656; }
    .set.four button.on { background: #f59c17; }
    .set button { border-bottom: 1px solid #525252; gap: 3px; padding-left: 1px; }
    .set.tall button { height: 17px; padding-left: 1px; } .set.tall button:last-child { height: 16px; }
    .set.short button { height: 11px; gap: 2px; } .set.short button:last-child { height: 10px; }
    .set.tall, .set.short { border-top: 0; }
    .set button:disabled { color: #858585; }
    .hd { height: 10px; display: flex; align-items: center; gap: 1px; padding-left: 2px; background: #3b3b3b; border-radius: 2px; color: #dcdcdc; margin: 0; font-weight: 400; font-size: 6px; }
    .hd .ic { color: #666; }
    .vt { display: flex; flex-direction: column; gap: 2px; }
    .vt button { writing-mode: vertical-rl; justify-content: center; width: 8px; background: #575757; border-radius: 0 3px 3px 0; color: #cfcfcf; }
    .vt button.on { background: #f59c17; color: #3a2503; }

    .center { display: grid; grid-template-rows: 19px minmax(0, 376fr) minmax(0, 239fr) 19px 17px; min-width: 0; padding: 0 1px; }
    .tri { display: grid; grid-template-columns: 1fr auto 1fr; align-items: center; padding: 0 3px 3px; }
    .tri.low { padding: 3px 3px 0; border-bottom: 1px solid #363636; }
    .tri > div { display: flex; gap: 2px; } .tri > div:last-child { justify-content: flex-end; }
    .w93 { width: 93px; } .w82 { width: 82px; } .w105 { width: 105px; } .w58 { width: 58px; } .w12 { width: 12px; }
    .tri .grp button, .bar .grp button { flex: 1; border: 0; padding: 0; }
    .schem { position: relative; background: #646e79; overflow: hidden; }
    .sbar { display: flex; align-items: center; height: 10px; margin: 3px 8px 0 12px; gap: 3px; }
    .sg { display: flex; height: 10px; background: #434a56; border: 1px solid #535b68; border-radius: 2px; align-items: center; overflow: hidden; }
    .sg button { height: 100%; justify-content: center; width: 10px; }
    .sg.lime { color: #b9c66a; }
    .sg button.wide { width: 52px; padding-left: 2px; justify-content: flex-start; }
    .sg button.mid { width: 48px; }
    .sg button.on { background: #e39a35; }
    .sg .sel { width: 148px; height: 100%; border-right: 1px solid #666; }
    .sg .sel select { text-align: left; padding-left: 2px; }
    .nav { margin-left: auto; display: flex; gap: 3px; color: #cfcfcf; }
    .links { position: absolute; inset: 0; width: 100%; height: 100%; }
    .node { position: absolute; width: 91px; background: #3d4251; border: 1px solid #747b8a; border-radius: 3px; }
    .node.sel2 { border-color: #e39a35; }
    .node > div { height: 9px; display: flex; align-items: center; justify-content: center; gap: 2px; position: relative; }
    .node > .nt { justify-content: flex-start; padding-left: 17px; }
    .node > div + div { border-top: 1px solid #5b6170; height: 10px; padding-left: 2px; }
    .node .ar { position: absolute; left: 5px; }
    .node.sel2 .nt { color: #f0a336; } .node.sel2 .nt .ar { color: #d6d6d6; }
    .node.sel2 > div + div { border-color: #b98038; }
    .status { display: grid; grid-template-columns: 196px auto 1fr; align-items: center; padding-left: 4px; line-height: 12px; }
    .status > div { display: flex; gap: 2px; align-items: center; }
    .status > div .grp button { padding: 0; }
    .status > span { align-self: start; }
    .hint { padding-left: 4px; white-space: nowrap; overflow: hidden; }

    .right { display: grid; grid-template-columns: minmax(0, 1fr); grid-template-rows: 17px 10px 10px minmax(0, 1fr) 7px 427px; border-left: 3px solid #333; min-width: 0; }
    .ricons { display: flex; justify-content: center; gap: 3px; align-items: center; border-bottom: 1px solid #333; }
    .rt { display: flex; align-items: flex-end; background: #2f2f2f; height: 10px; padding-left: 8px; gap: 1px; color: #999; line-height: 7px; }
    .rt button { height: 9px; width: 28px; background: #3a3a3a; border-radius: 3px 3px 0 0; justify-content: center; }
    .rt button.on { background: #555; color: #f09b25; }
    .rt button.wider { width: 35px; }
    .rt button.add1 { width: 8px; background: none; }
    .rt .nav { gap: 2px; padding: 0 1px 1px; align-items: center; color: #b5b5b5; }
    .add { display: flex; align-items: center; gap: 3px; padding: 0 2px 0 1px; }
    .add button { background: #5a5a5a; border-radius: 3px; height: 9px; justify-content: center; }
    .add .main-add { flex: 1; position: relative; margin-right: 12px; padding-right: 12px; }
    .add .main-add .ic { position: absolute; right: 3px; }
    .add .s { width: 25px; } .add .q { width: 7px; background: none; }
    .add .s + .q { margin-left: 0; }
    .tree { background: #8e93a2; margin: 1px 10px 0 1px; color: #15171d; overflow: hidden; }
    table { border-collapse: collapse; width: 100%; table-layout: fixed; }
    th { background: #626f7a; color: #d6dbe0; font-weight: 400; text-align: left; height: 9px; padding: 0; border-right: 1px solid #7c8591; line-height: 8px; }
    td { height: 9px; padding: 0; line-height: 8px; white-space: nowrap; }
    td .ic, th .ic { margin: 0 auto; }
    td.n .ic { margin: 0; }
    td.gut { border-right: 1px solid #7d8291; }
    td.n > div { display: flex; align-items: center; gap: 1px; }
    td.n .pre { display: flex; color: #4b4f5c; width: 7px; margin-right: 2px; }
    .dim { color: #6b7080; }
    tr.on { background: #474b56; color: #f3a33a; }
    tr.on .pre { color: #9a9ea9; }
    .n1 { font-weight: 700; }
    .hs { margin: 1px 40px 1px 3px; background: #6a6a6a; border-radius: 2px; height: 5px; }
    .props { display: grid; grid-template-columns: minmax(0, 1fr); grid-template-rows: 10px 1fr 17px; padding-top: 2px; }
    .pb { display: grid; grid-template-columns: minmax(0, 1fr) 8px; gap: 3px; padding: 2px 3px 0 3px; align-items: start; }
    .pb > .form { display: flex; flex-direction: column; }
    .sec { height: 9px; margin-bottom: 1px; }
    .row { display: grid; grid-template-columns: 53px minmax(0, 1fr); gap: 3px; align-items: start; }
    .row.sp { height: 11px; align-items: center; }
    .row > label, .labs label, .row > span { text-align: right; height: 9px; line-height: 9px; display: block; }
    .cells { border-radius: 3px; overflow: hidden; background: #8e92a2; }
    .cells.blk { margin-bottom: 1px; }
    .cell { display: grid; grid-template-columns: 7px minmax(0, 1fr) 8px 8px; height: 9px; align-items: center; }
    .cell i { background: #555558; height: 9px; display: grid; place-items: center; font-style: normal; color: #ccc; }
    .cell input { padding-left: 5px; height: 9px; width: 100%; color: #15171f; }
    .name input { background: #8e92a2; border-radius: 3px; height: 9px; padding-left: 4px; color: #15171f; width: 100%; border: 1px solid #a3a7b6; }
    .acts { margin: 0 0 2px 63px; background: #5a5a5a; border-radius: 3px; display: grid; }
    .acts button { height: 8px; padding: 0 2px; justify-content: space-between; border-bottom: 1px solid #525252; }
    .chk { display: flex; align-items: center; gap: 3px; margin-left: 56px; height: 10px; }
    .chk .pad { width: 7px; height: 8px; background: #595959; border-radius: 3px 0 0 3px; }
    .chk input { appearance: none; width: 8px; height: 8px; background: #606060; margin-left: -3px; display: grid; place-items: center; border-radius: 0 2px 2px 0; }
    .chk input:checked { background: #f09b25; }
    .chk input:checked::before { content: "✓"; color: #2b1a00; font: 700 8px/8px "DejaVu Sans", sans-serif; }
    .drop2 { background: #5a5a5a; height: 9px; border-radius: 3px; }
    .drop2 select { text-align: left; padding-left: 8px; }
    .grad { display: block; width: 100%; height: 56px; margin-top: 1px; border-radius: 3px; background: #596771; }
    .row.gr > span { margin-top: 3px; }
    .cmd { display: flex; align-items: center; gap: 4px; padding: 0 3px 0 4px; border-top: 1px solid #343434; }
    .cmd input { flex: 1; height: 9px; background: #8e92a2; border-radius: 3px; padding-left: 5px; }
    .cmd input::placeholder { color: #3c404c; opacity: 1; }
  `];

  private btn(icon: string, label: string, w: number) {
    return html`<button class=${label ? "t" : "i1"} aria-label=${label || icon} style=${styleMap({ width: w + "px" })}>${ic(icon)}${label}</button>`;
  }
  private strip(names: string[], cls: string, on = "") {
    return html`<div class="grp ${cls}">${names.map((n, i) => html`<button aria-label=${n} class=${classMap({ c: true, on: on === n + i })}>${ic(n, 9)}</button>`)}</div>`;
  }
  private hd(t: string, cls = "", icon = "down") { return html`<h3 class="hd ${cls}">${ic(icon, 5)}${t}</h3>`; }
  private vt(tabs: [string, number][], on: string) {
    return html`<div class="vt">${tabs.map(([t, h]) => html`<button class=${classMap({ on: t === on })} style=${styleMap({ height: h + "px" })}>${t}</button>`)}</div>`;
  }
  private set(kind: string, items: [string, string][], size: number) {
    return html`<div class="set ${kind}">${items.map(([i, t]) => html`<button ?disabled=${t === "Drift On Collision"}>${ic(i, size)}${t}</button>`)}</div>`;
  }
  private fields(rows: [string, string][], mark = "", cls = "blk", key = true) {
    const id = (l: string) => (rows[0][0] + l).replace(/\s/g, "");
    return html`<div class="row ${cls === "sp" ? "sp" : ""}">
      <div class="labs">${rows.map(([l]) => html`<label for=${id(l)}>${l}</label>`)}</div>
      <div class="cells ${cls}">${rows.map(([l, v]) => html`<div class="cell"><i>${mark}</i><input id=${id(l)} .value=${v}>${key ? ic("keyb", 7) : html`<span></span>`}${ic("rev", 7)}</div>`)}</div></div>`;
  }
  private check(label: string, on: boolean) {
    return html`<label class="chk"><span class="pad"></span><input type="checkbox" .checked=${on}>${label}</label>`;
  }

  private left() {
    return html`<aside class="left">
      <div class="bar">${this.strip(["cube", "cross", "tri", "pen", "spring", "clock", "stamp", "search"], "fill", "spring4")}${this.strip(["refresh"], "w12")}</div>
      <div class="lbody"><div class="stack">
        <div class="set four">${["giz1", "giz2", "giz3", "giz4"].map((n, i) => html`<button aria-label=${n} class=${classMap({ on: i === 1 })}>${ic(n, 15)}</button>`)}</div>
        ${this.set("two", [["axes", "World"], ["local", "Local"]], 8)}
        <div class="set four">${["starx", "rocks", "torch", "ball"].map((n) => html`<button aria-label=${n}>${ic(n, 13)}</button>`)}</div>
        ${this.set("two", [["dup", "Duplicate"], ["", "Instance"]], 8)}
        ${this.hd("Rigid Body")}
        ${this.set("tall", [["active", "Active"], ["compound", "Compound"], ["kinematic", "Kinematic"], ["static", "Static"]], 13)}
        ${this.hd("Soft Body")}
        ${this.set("tall", [["soft", "Soft Body"], ["anchor", "Make Anchors"]], 13)}
        ${this.hd("General")}
        ${this.set("short", [["shatter", "Procedural Shatter"], ["", "Constraint Modifier"], ["curve", "Make Dynamic Curves"], ["drift", "Drift On Collision"]], 8)}
        ${this.hd("Scripts")}
        ${this.set("short", [["hair", "Dynamic Curves as Hair"]], 8)}
        ${this.hd("Constraints")}
        ${this.set("short", [["pin", "Pin"], ["pin", "Point"], ["pin", "Hinge"], ["slide", "Slide Hinge"], ["coil", "Spring"]], 8)}
        ${this.hd("Forces & Falloffs")}
        ${this.set("short", [["wind", "Wind"], ["radial", "Radial"]], 8)}
        ${this.hd("Properties")}
        ${this.set("tall", [["tool", "Tool Properties"]], 13)}
      </div>
      ${this.vt([["Setup", 22], ["Constraints", 34], ["Inverse Kinematics", 49], ["Deformers", 32], ["Weighting", 29], ["Controls", 26], ["Dynamics", 30], ["Particles", 26]], "Dynamics")}
      </div></aside>`;
  }

  private node(n: NodeBox) {
    return html`<div class="node ${n.sel ? "sel2" : ""}" style=${styleMap({ left: n.x - 149 + "px", top: n.y - 445 + "px" })}>
      <div class="nt"><span class="ar">${ic("vee", 6)}</span>${n.icon ? ic(n.icon, 6) : nothing}${n.title}</div>
      ${(n.rows ?? []).map((r, i) => html`<div>${n.arrow === i ? html`<span class="ar">${ic("right", 6)}</span>` : nothing}${r}</div>`)}</div>`;
  }

  private center() {
    const views = ["lines", "layers", "corners", "frame", "timer"];
    const nodes: NodeBox[] = [
      { x: 728, y: 494, title: "Transform Effector", icon: "axes" },
      { x: 648, y: 524, title: "Radial Falloff", icon: "fall", rows: ["Deform Meshes", "Textures"], sel: true, arrow: 1 },
      { x: 878, y: 514, title: "Transform (Full Mesh)", icon: "xform", rows: ["Effector", "Falloffs", "Geometry"], arrow: 2 },
      { x: 728, y: 574, title: "Mesh", icon: "mesh" },
    ];
    const pins = [[818, 499], [738, 529], [818, 579], [878, 529], [878, 539], [878, 549]];
    return html`<main class="center">
      <div class="tri green">
        <div>${this.strip(["cube", "cross", "bone", "box", "wave", "target", "dots", "square"], "w93")}${this.strip(["plus"], "w12")}${this.strip(["search"], "w12")}</div>
        <div class="grey">${this.strip(["cube", "cross", "tri", "clock", "bone", "box", "dots"], "w82", "bone4")}${this.strip(["plus"], "w12")}</div>
        <div>${this.strip(views, "w58")}${this.strip(["plus"], "w12")}</div>
      </div>
      <model-viewport></model-viewport>
      <section class="schem">
        <svg class="links" aria-hidden="true"><g transform="translate(-149 -445)" fill="none" stroke="#a394d4" stroke-width="1">
          <path d="M818 499C846 499 850 529 878 529M738 529C790 529 820 539 878 539M818 579C846 579 850 549 878 549"/></g></svg>
        <div class="sbar">
          <div class="sg lime">${["nodes", "orbit", "addnode"].map((n) => html`<button aria-label=${n}>${ic(n, 7)}</button>`)}</div>
          <div class="sg"><div class="sel"><select aria-label="Workspace"><option>Workspace: Workspace</option></select>${ic("down", 6)}</div>
            <button style=${styleMap({ width: "26px" })} aria-label="Layout"><svg class="ic" width="16" height="6" viewBox="0 0 40 15">${icons.cells}</svg></button></div>
          <div class="sg">${["tree3", "left", "up", "dn"].map((n) => html`<button aria-label=${n}>${ic(n, 7)}</button>`)}</div>
          <div class="sg"><button class="wide">Add Selected</button><button class="wide mid">Add...</button><button>${ic("down", 6)}</button></div>
          <div class="sg"><button class="wide mid">Select Backdrop</button></div>
          <div class="sg"><button class="on" aria-label="Red">${ic("rdot", 7)}</button><button class="on" aria-label="White">${ic("wdot", 7)}</button><button aria-label="Grid">${ic("four", 7)}</button><button aria-label="Back">${ic("arrowl", 7)}</button></div>
          <div class="nav">${["move", "lens", "expand", "gear", "right"].map((n) => ic(n, 7))}</div>
        </div>
        ${nodes.map((n) => this.node(n))}
        <svg class="links" aria-hidden="true"><g transform="translate(-149 -445)">
          ${pins.map(([x, y]) => svg`<circle cx=${x} cy=${y} r="1.700" fill="#c9b8f2" stroke="#2d2f3c" stroke-width=".6"/>`)}
          ${[[648, 539], [648, 549], [969, 519]].map(([x, y]) => svg`<circle cx=${x} cy=${y} r="1.500" fill="#5b6270" stroke="#23252e" stroke-width=".8"/>`)}</g></svg>
      </section>
      <div class="tri low green">
        <div>${this.strip(["search"], "w12")}</div>
        <div>${this.strip(["cube", "cross", "bone", "stamp", "corners", "wave", "box", "pen", "link"], "w105", "wave5")}${this.strip(["plus"], "w12")}</div>
        <div>${this.strip(views, "w58")}${this.strip(["plus"], "w12")}</div>
      </div>
      <footer class="status"><span>Position X, Y, Z: &nbsp; 1.1 m, -645 mm, 0 m</span>
        <div class="green"><div class="grp"><button style=${styleMap({ width: "34px" })}>${ic("clock")}<span class="grey">Time</span></button></div><div class="grp grey"><button class="c" aria-label="Windows">${ic("windows")}</button></div><div class="grp"><button class="c" aria-label="List">${ic("lines")}</button><button class="c on" aria-label="Pause">${ic("pause")}</button></div></div>
        <span class="hint">Left Double Click: Select Connected ● Right Click: Viewport Context Menu (popup menu) ● Right Click and Drag: 3D Selection: Area ● Middle Click and Drag: 3D Selection: Pick Through ● [Any Key]-[Any Button] Click and Drag: dragDropBegin</span>
      </footer></main>`;
  }

  private right() {
    const rows: [number, string[], string, string, string][] = [
      [0, ["clap"], "Displace_Geo_001.lxo*", "", "right"], [0, ["clap"], "Untitled*", "b", "down"],
      [1, ["mesh"], "Mesh", "", ""], [2, ["xform"], "Transform", "dim", ""], [1, ["axes"], "Transform Effector", "", ""],
      [1, ["camic", "orb"], "Camera", "b", ""], [1, ["tex"], "Texture Group", "", ""], [1, ["light"], "Directional Light", "", ""], [1, ["fall"], "Radial Falloff", "on", ""],
    ];
    const pad = [0, 6, 12];
    return html`<aside class="right">
      <div class="ricons">${["brush", "blues", "bluet", "greys", "rock3", "rock2", "blue"].map((n) => ic(n, 9))}</div>
      <div class="rt"><button class="on">Scenes</button><button>Shading</button><button>Groups</button><button>Clips</button><button class="add1">+</button><span class="nav">${["expand", "gear", "right"].map((n) => ic(n, 6))}</span></div>
      <div class="add"><button class="main-add">Add Item ${ic("down", 6)}</button><button class="s">Select</button><button class="s">Filter</button>${["bars", "doc", "funnel"].map((n) => html`<button class="q" aria-label=${n}>${ic(n, 7)}</button>`)}</div>
      <div class="tree"><table><colgroup><col style="width:12px"><col style="width:13px"><col style="width:13px"><col></colgroup>
        <thead><tr><th>${ic("eye", 7)}</th><th>${ic("plus", 8)}</th><th>${ic("axes", 7)}</th><th>&nbsp; Name</th></tr></thead>
        <tbody>${rows.map(([d, i, t, k, ar], n) => html`<tr class=${k === "on" ? "on" : ""}>
          <td class="gut">${n ? ic("eye", 6) : nothing}</td><td class="gut">${k === "on" ? ic("plus", 8) : nothing}</td><td class="gut"></td>
          <td class="n"><div><span class="pre">${ar ? ic(ar, 5) : "┄"}</span><span style=${styleMap({ width: pad[d] + "px" })}></span>${i.map((x) => ic(x, 7))}<span class=${k === "b" ? "n1" : ""}>${t}${k === "dim" ? html` <span class="dim">(Full Mesh)</span>` : nothing}</span></div></td></tr>`)}</tbody></table></div>
      <div class="hs"></div>
      <div class="props">
        <div class="rt"><button class="on">Properties</button><button>Channels</button><button class="wider">Vertex &nbsp;…</button><button>Stats</button><button class="add1">+</button><span class="nav">${["expand", "gear", "right"].map((n) => ic(n, 6))}</span></div>
        <div class="pb"><div class="form">
          <div class="row name sec"><label for="nm">Name</label><input id="nm" .value=${"Radial Falloff"}></div>
          ${this.hd("Notes", "sec", "right")}${this.hd("Transform", "sec")}
          ${this.fields([["Position X", "2.85 m"], ["Y", "0 m"], ["Z", "0 m"]])}
          ${this.fields([["Rotation X", "0.0 °"], ["Y", "0.0 °"], ["Z", "0.0 °"]])}
          ${this.fields([["Scale X", "186.0 %"], ["Y", "186.0 %"], ["Z", "186.0 %"]], "•")}
          <div class="acts">${["Reset", "Zero", "Add"].map((t) => html`<button>${t}${ic("down", 5)}</button>`)}</div>
          ${this.hd("Radial Falloff", "sec")}
          ${this.check("Falloff Enable", true)}${this.check("Invert", false)}
          ${this.fields([["Strength", "100.0 %"]], "", "sp", false)}
          ${this.check("Deformer Enable", true)}${this.check("Use Setup", false)}
          ${this.fields([["Radius X", "1 m"], ["Y", "1 m"], ["Z", "1 m"]])}
          <div class="row sp"><label for="decay">Decay Shape</label><div class="sel drop2"><select id="decay"><option>Smooth</option></select>${ic("down", 5)}</div></div>
          ${this.fields([["Inverse Power", "2"]], "", "sp", false)}
          ${this.fields([["Solid Core", "0.0 %"]], "", "sp", false)}
          ${this.hd("Easing", "sec")}
          <div class="row gr"><span>Gradient</span><svg class="grad" viewBox="0 0 94 57" preserveAspectRatio="none" aria-hidden="true">
            <defs><linearGradient id="k"><stop offset="0"/><stop offset="1" stop-color="#f4eef0"/></linearGradient></defs>
            <path d="M0 0H94V3H0zM0 46H94V57H0z" fill="#6e7a85"/><path d="M28 0V46M47 0V46M66 0V46M0 25H94" stroke="#52606a" stroke-width=".6"/>
            <path d="M9 0V50M0 44H94M0 48H94" stroke="#2b3640"/><path d="M85 3V57" stroke="#84909b"/>
            <path d="M0 48L9 44L86 4" fill="none" stroke="#cfd3b9" stroke-width=".9"/><circle cx="9" cy="44" r="1.300" fill="#fff"/><circle cx="86" cy="4" r="1.300" fill="#fff"/>
            <circle cx="90" cy="4" r="2.600" fill="#d0d4d8"/><path d="M89 9l3 2.500l-3 2.500z" fill="#e0e0e0"/>
            <rect x="9" y="49" width="76" height="6" fill="url(#k)"/><path d="M8 49h2v6h-2zM83 49h2v6h-2z" fill="#fff"/></svg></div>
        </div>${this.vt([["Radial Falloff", 37], ["Display", 22], ["Assembly", 31], ["User Channels", 40], ["Tags", 18]], "Radial Falloff")}</div>
        <div class="cmd"><span>&gt;</span><input aria-label="Command" placeholder="Command">${ic("rec", 9)}</div>
      </div></aside>`;
  }

  render() {
    const menus = ["File", "Edit", "View", "Select", "Item", "Geometry", "Texture", "Vertex Map", "Animate", "Dynamics", "Render", "ACS", "Layout", "System", "Help"];
    return html`
      <header class="title">${ic("logo", 8)}<span>Untitled* - Modo</span><div class="win">${["min", "windows", "close"].map((n) => html`<button aria-label=${n}>${ic(n, 7)}</button>`)}</div></header>
      <nav class="menu">${menus.map((m) => html`<button>${m}</button>`)}</nav>
      <div class="layouts"><div class="l">${ic("home", 7)}<button>Default Layouts ${ic("down", 5)}</button></div>
        <div class="tabs3">${["Modo", "Model", "Animate", "Render", "VR"].map((t, i) => html`<button class=${classMap({ on: !i })}>${t}</button>`)}<span>&nbsp;</span>${ic("bigplus", 6)}</div>
        <div class="r"><button class="only">${ic("star", 6)}Only</button>${ic("gear", 7)}</div></div>
      <div class="tools">
        <div><div class="grp green"><button style=${styleMap({ width: "38px" })}>${ic("lines", 8)}<span class="grey">Viewports</span></button></div><div class="green">${this.strip(["panel", "swap"], "")}</div></div>
        <div>
          <div class="grp">${this.btn("person", "", 10)}</div>
          <div class="grp">${this.btn("pic", "", 11)}${this.btn("net", "", 11)}${this.btn("shade", "", 11)}</div>
          <div class="grp">${this.btn("blue", "Vertices", 39)}${this.btn("blue", "Edges", 38)}${this.btn("poly", "Polygons", 39)}</div>
          <div class="grp">${this.btn("blue", "", 11)}<button class="i1" style=${styleMap({ width: "9px" })} aria-label="More">${ic("down", 5)}</button></div>
          <div class="grp">${this.btn("shield", "", 11)}${this.btn("action", "Action Center", 48)}${this.btn("falloff", "Falloff", 39)}${this.btn("constraint", "Mesh Constraint", 54)}</div>
          <div class="grp">${this.btn("sym", "Symmetry", 46)}${this.btn("snap", "Snapping", 41)}${this.btn("plane", "Work Plane", 43)}</div>
          <div class="grp"><div class="sel" style=${styleMap({ width: "80px" })}><select aria-label="Drop Action"><option>Drop Action: (none)</option></select>${ic("down", 6)}</div></div>
          <div class="grp">${this.btn("render", "Render", 38)}${this.btn("preview", "Preview", 38)}</div>
        </div>
        <div class="r green">${this.strip(["swap", "panel"], "")}${this.strip(["search"], "")}<div class="grp">${this.btn("kits", "Kits", 36)}</div>${this.strip(["panel"], "")}</div>
      </div>
      <div class="main">${this.left()}${this.center()}${this.right()}</div>`;
  }
}
